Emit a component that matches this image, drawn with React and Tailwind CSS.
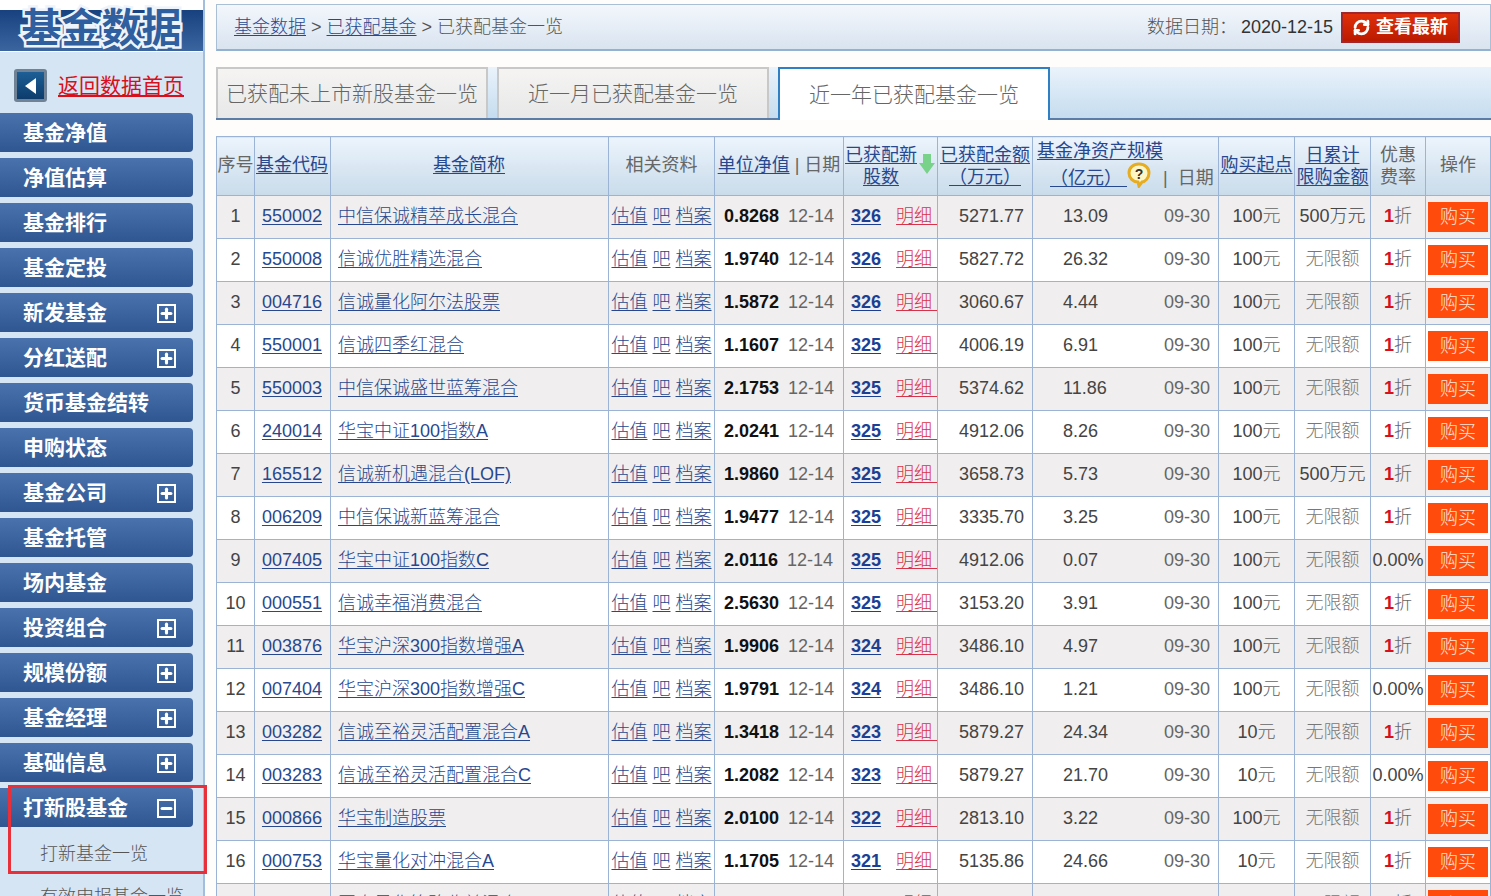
import React from "react";
import { RefreshCw, Plus, Minus } from "lucide-react";

const menus = [
  { name: "基金净值" },
  { name: "净值估算" },
  { name: "基金排行" },
  { name: "基金定投" },
  { name: "新发基金", plus: true },
  { name: "分红送配", plus: true },
  { name: "货币基金结转" },
  { name: "申购状态" },
  { name: "基金公司", plus: true },
  { name: "基金托管" },
  { name: "场内基金" },
  { name: "投资组合", plus: true },
  { name: "规模份额", plus: true },
  { name: "基金经理", plus: true },
  { name: "基础信息", plus: true },
];

const rows = [
  ["550002", "中信保诚精萃成长混合", "0.8268", "326", "5271.77", "13.09", "100", "500万元", "1"],
  ["550008", "信诚优胜精选混合", "1.9740", "326", "5827.72", "26.32", "100", "无限额", "1"],
  ["004716", "信诚量化阿尔法股票", "1.5872", "326", "3060.67", "4.44", "100", "无限额", "1"],
  ["550001", "信诚四季红混合", "1.1607", "325", "4006.19", "6.91", "100", "无限额", "1"],
  ["550003", "中信保诚盛世蓝筹混合", "2.1753", "325", "5374.62", "11.86", "100", "无限额", "1"],
  ["240014", "华宝中证100指数A", "2.0241", "325", "4912.06", "8.26", "100", "无限额", "1"],
  ["165512", "信诚新机遇混合(LOF)", "1.9860", "325", "3658.73", "5.73", "100", "500万元", "1"],
  ["006209", "中信保诚新蓝筹混合", "1.9477", "325", "3335.70", "3.25", "100", "无限额", "1"],
  ["007405", "华宝中证100指数C", "2.0116", "325", "4912.06", "0.07", "100", "无限额", "0"],
  ["000551", "信诚幸福消费混合", "2.5630", "325", "3153.20", "3.91", "100", "无限额", "1"],
  ["003876", "华宝沪深300指数增强A", "1.9906", "324", "3486.10", "4.97", "100", "无限额", "1"],
  ["007404", "华宝沪深300指数增强C", "1.9791", "324", "3486.10", "1.21", "100", "无限额", "0"],
  ["003282", "信诚至裕灵活配置混合A", "1.3418", "323", "5879.27", "24.34", "10", "无限额", "1"],
  ["003283", "信诚至裕灵活配置混合C", "1.2082", "323", "5879.27", "21.70", "10", "无限额", "0"],
  ["000866", "华宝制造股票", "2.0100", "322", "2813.10", "3.22", "100", "无限额", "1"],
  ["000753", "华宝量化对冲混合A", "1.1705", "321", "5135.86", "24.66", "10", "无限额", "1"],
  ["000124", "国泰量化策略收益混合", "1.6032", "320", "4210.35", "5.18", "100", "无限额", "1"],
];

const link = "text-[#27488f] underline underline-offset-2";
const thBase = "border border-[#9bb4d6] p-0 font-normal text-[18px] leading-[22px] text-[#666] bg-gradient-to-b from-[#ecf4fc] to-[#c9dbea]";
const th = `${thBase} pb-[2px]`;
const tdBase = "border border-[#9bb4d6] p-0 text-[18px] text-[#444]";
const td = `${tdBase} pb-[2px]`;

function MenuItem({ item }) {
  return (
    <div className="h-[39px] w-[193px] mb-[6px] pl-[23px] pr-[17px] flex items-center justify-between rounded-r-[4px] bg-gradient-to-b from-[#4a73ad] to-[#2f5690] text-white text-[21px] font-bold">
      <span>{item.name}</span>
      {item.plus && (
        <span className="mt-[2px] w-[19px] h-[19px] border-2 border-white flex items-center justify-center">
          <Plus size={15} strokeWidth={5} />
        </span>
      )}
    </div>
  );
}

function Sidebar() {
  return (
    <div className="w-[205px] shrink-0 h-[896px] overflow-hidden bg-[#d6e5f4] border-r-2 border-[#a3bddc]">
      <div className="h-[52px] bg-white relative flex justify-center overflow-hidden">
        <div className="absolute left-0 right-0 top-[10px] h-[41px] bg-gradient-to-b from-[#18427f] to-[#3a659f]" />
        <span className="relative pt-[3px] text-[40px] leading-[50px] font-bold text-[#2f5f9e] [-webkit-text-stroke:5px_#eef4fb] [paint-order:stroke_fill]">
          基金数据
        </span>
      </div>
      <div className="h-[61px] pt-[6px] pl-[14px] flex items-center gap-[11px]">
        <div className="w-[33px] h-[33px] rounded-[3px] border-[3px] border-[#6f8296] bg-gradient-to-b from-[#1d5f96] to-[#0d3c6c] flex items-center justify-center">
          <span className="w-0 h-0 border-y-[8px] border-y-transparent border-r-[11px] border-r-white" />
        </div>
        <span className="text-[21px] font-normal text-[#d8101c] underline underline-offset-2">返回数据首页</span>
      </div>
      {menus.map((m) => (
        <MenuItem key={m.name} item={m} />
      ))}
      <div className="h-[39px] w-[193px] pl-[23px] pr-[17px] flex items-center justify-between rounded-r-[4px] bg-gradient-to-b from-[#4a73ad] to-[#2f5690] text-white text-[21px] font-bold">
        <span>打新股基金</span>
        <span className="mt-[2px] w-[19px] h-[19px] border-2 border-white flex items-center justify-center">
          <Minus size={15} strokeWidth={5} />
        </span>
      </div>
      <div className="h-[46px] pt-[8px] pl-[40px] flex items-center text-[18px] text-[#555]">打新基金一览</div>
      <div className="h-[40px] pt-[8px] pl-[40px] flex items-center text-[18px] text-[#555]">有效申报基金一览</div>
    </div>
  );
}

function TopBar() {
  return (
    <div className="mt-[4px] h-[47px] pl-[17px] pr-[30px] flex items-center justify-between border border-[#a9bfd6] border-b-2 border-b-[#93b2cf] bg-gradient-to-b from-[#f3f7fc] to-[#d9e4f0] text-[18px] text-[#555]">
      <div>
        <a className={link}>基金数据</a> &gt; <a className={link}>已获配基金</a> &gt; 已获配基金一览
      </div>
      <div className="flex items-center">
        <span>数据日期：</span>
        <span className="ml-[4px] text-[#333]">2020-12-15</span>
        <button className="ml-[8px] w-[119px] h-[31px] flex items-center justify-center gap-[6px] border-2 border-[#a3262a] bg-gradient-to-b from-[#e0300a] to-[#bb1a00] text-white font-bold text-[18px]">
          <RefreshCw size={17} strokeWidth={4} />
          查看最新
        </button>
      </div>
    </div>
  );
}

function Tabs() {
  const tab = "w-[272px] flex items-center justify-center text-[21px]";
  const off = "h-[51px] border-2 border-[#c8c8c8] border-b-0 bg-gradient-to-b from-[#f5f4f3] to-[#e8e8e8] text-[#666]";
  return (
    <div className="mt-[16px] h-[53px] flex gap-[9px] items-start border-b-2 border-[#5a7ca6] bg-gradient-to-b from-[#eaf3fb] to-[#c5dcef]">
      <div className={`${tab} ${off}`}>已获配未上市新股基金一览</div>
      <div className={`${tab} ${off}`}>近一月已获配基金一览</div>
      <div className={`${tab} h-[53px] relative border-2 border-b-0 border-[#2f7fc4] bg-white text-[#666]`}>近一年已获配基金一览</div>
    </div>
  );
}

function Row({ r, i }) {
  const bg = i % 2 === 0 ? "bg-[#f0eeee]" : "bg-white";
  return (
    <tr className={`h-[43px] ${bg}`}>
      <td className={`${td} text-center`}>{i + 1}</td>
      <td className={`${td} text-center pr-[1px]`}><a className={link}>{r[0]}</a></td>
      <td className={`${td} pl-[7px]`}><a className={link}>{r[1]}</a></td>
      <td className={`${td} text-center whitespace-nowrap`}>
        <a className={link}>估值</a> <a className={link}>吧</a> <a className={link}>档案</a>
      </td>
      <td className={td}>
        <div className="flex pl-[9px] gap-[9px]">
          <span className="font-bold text-[#111]">{r[2]}</span>
          <span className="text-[#666]">12-14</span>
        </div>
      </td>
      <td className={td}>
        <div className="flex pl-[7px] gap-[15px]">
          <a className="text-[#1b3f94] font-bold underline underline-offset-2">{r[3]}</a>
          <a className="text-[#d8324a] underline underline-offset-2 whitespace-pre">明细&nbsp;</a>
        </div>
      </td>
      <td className={`${td} text-right pr-[8px]`}>{r[4]}</td>
      <td className={td}>
        <div className="flex pl-[30px] pr-[8px]">
          <span>{r[5]}</span>
          <span className="ml-auto text-[#666]">09-30</span>
        </div>
      </td>
      <td className={`${td} text-center`}>{r[6]}<span className="text-[#666]">元</span></td>
      <td className={`${td} text-center ${r[7] === "无限额" ? "text-[#777]" : ""}`}>{r[7]}</td>
      <td className={`${td} text-center`}>
        {r[8] === "1" ? (
          <><span className="font-bold text-[#d8101c]">1</span><span className="text-[#666]">折</span></>
        ) : (
          "0.00%"
        )}
      </td>
      <td className={tdBase}>
        <div className="mx-auto w-[60px] h-[30px] bg-[#ff4c0c] text-[#ffe6da] flex items-center justify-center">购买</div>
      </td>
    </tr>
  );
}

function FundTable() {
  return (
    <table className="mt-[16px] w-[1274px] table-fixed border-collapse">
      <colgroup>
        <col className="w-[38px]" />
        <col className="w-[76px]" />
        <col className="w-[278px]" />
        <col className="w-[106px]" />
        <col className="w-[129px]" />
        <col className="w-[94px]" />
        <col className="w-[95px]" />
        <col className="w-[186px]" />
        <col className="w-[76px]" />
        <col className="w-[76px]" />
        <col className="w-[55px]" />
        <col className="w-[65px]" />
      </colgroup>
      <thead>
        <tr className="h-[59px]">
          <th className={th}>序号</th>
          <th className={`${th} pr-[1px]`}><a className={link}>基金代码</a></th>
          <th className={`${th} pr-[1px]`}><a className={link}>基金简称</a></th>
          <th className={th}>相关资料</th>
          <th className={`${th} whitespace-nowrap`}><a className={link}>单位净值</a> | 日期</th>
          <th className={thBase}>
            <div className="flex items-center">
              <a className={`${link} w-[74px] shrink-0 whitespace-nowrap`}>已获配新<br />股数</a>
              <svg width="18" height="22" viewBox="0 0 18 22" className="-mt-[4px]">
                <path d="M5 1h8v9h4l-8 11L1 10h4z" fill="#79d28a" />
              </svg>
            </div>
          </th>
          <th className={`${thBase} [text-spacing-trim:space-all]`}><a className={`${link} whitespace-nowrap`}>已获配金额<br />（万元）</a></th>
          <th className={`${th} [text-spacing-trim:space-all]`}>
            <div className="pl-[4px] text-left leading-[27px]">
              <a className={`${link} whitespace-nowrap`}>基金净资产规模</a>
              <div className="flex items-center">
                <a className={`${link} ml-[13px] whitespace-pre`}>（亿元）&nbsp;</a>
                <svg width="24" height="26" viewBox="0 0 24 26" className="-mt-[8px]">
                  <path d="M12 2c6 0 10 4 10 9 0 5-4 9-7 9l-3 4-1-4C6 20 2 16 2 11 2 6 6 2 12 2z" fill="#fff6c4" stroke="#e6ac22" strokeWidth="3" />
                  <text x="12" y="16.5" textAnchor="middle" fontSize="14" fontWeight="700" fill="#333">?</text>
                </svg>
                <span className="ml-[12px] whitespace-nowrap">|&nbsp;&nbsp;日期</span>
              </div>
            </div>
          </th>
          <th className={th}><a className={`${link} whitespace-nowrap`}>购买起点</a></th>
          <th className={thBase}><a className={`${link} whitespace-nowrap`}>日累计<br />限购金额</a></th>
          <th className={thBase}>优惠<br />费率</th>
          <th className={th}>操作</th>
        </tr>
      </thead>
      <tbody>
        {rows.map((r, i) => (
          <Row key={r[0]} r={r} i={i} />
        ))}
      </tbody>
    </table>
  );
}

export default function App() {
  return (
    <div className="relative h-[896px] w-[1491px] overflow-hidden flex bg-[#fefdfb] font-light [font-family:'Liberation_Sans','Noto_Sans_CJK_SC',sans-serif]">
      <Sidebar />
      <div className="ml-[11px] w-[1275px] shrink-0">
        <TopBar />
        <Tabs />
        <FundTable />
      </div>
      <div className="absolute left-[8px] top-[785px] w-[199px] h-[89px] border-[3px] border-[#e8303a]" />
    </div>
  );
}
